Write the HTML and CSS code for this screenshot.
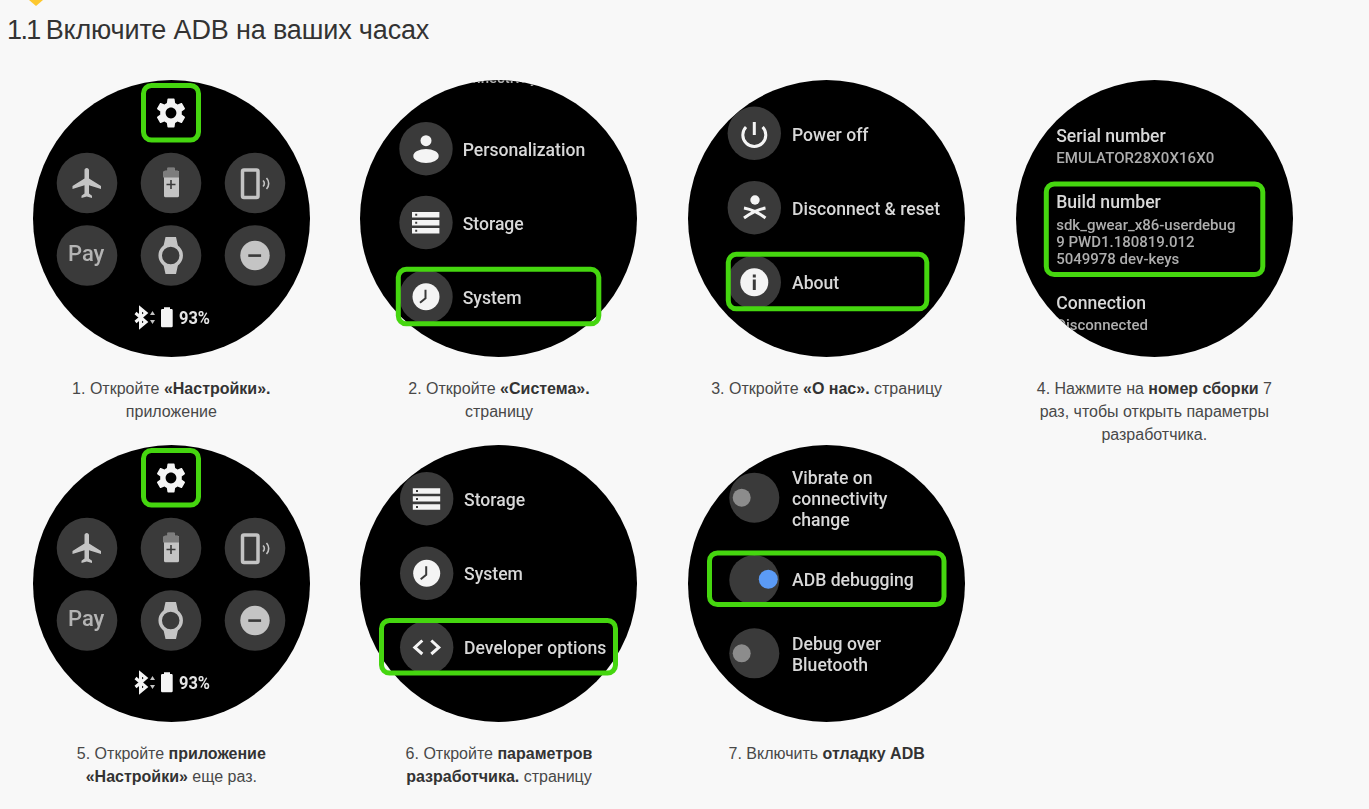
FILE: index.html
```html
<!DOCTYPE html>
<html lang="ru">
<head>
    <meta charset="UTF-8">
    <meta name="viewport" content="width=device-width, initial-scale=1.0">
    <title>Включите ADB на ваших часах</title>
    <link rel="stylesheet" href="styles.css">
</head>
<body>
    <svg class="marker" width="14" height="6" viewBox="0 0 14 6"><polygon points="0,0 14,0 7,6"/></svg>
    <h1><span class="num">1.1 </span>Включите ADB на ваших часах</h1>

    <div class="steps">
        <!-- step 1 -->
        <figure class="step">
            <svg class="watch" width="277" height="277" viewBox="0 0 277 277">
                <defs>
                    <clipPath id="face"><circle cx="138.5" cy="138.5" r="138.5"/></clipPath>
                    <g id="icon-storage">
                        <path class="white" d="M-13.7-10.5h27.4v5.6h-27.4zM-13.7-2.5h27.4v5.4h-27.4zM-13.7 5.5h27.4v5.6h-27.4z"/>
                        <path class="tile" d="M-10.5-8.7h2v2h-2zM-10.5-.8h2v2h-2zM-10.5 7.3h2v2h-2z"/>
                    </g>
                    <g id="icon-clock">
                        <circle class="white" r="13.5"/>
                        <path class="hand" d="M-.5-7V1.5L-6 6"/>
                    </g>
                    <g id="quick">
                        <path class="white" transform="translate(120 15) scale(1.5)" d="M19.14 12.94c.04-.3.06-.61.06-.94 0-.32-.02-.64-.07-.94l2.03-1.58c.18-.14.23-.41.12-.61l-1.92-3.32c-.12-.22-.37-.29-.59-.22l-2.39.96c-.5-.38-1.03-.7-1.62-.94l-.36-2.54c-.04-.24-.24-.41-.48-.41h-3.84c-.24 0-.43.17-.47.41l-.36 2.54c-.59.24-1.13.57-1.62.94l-2.39-.96c-.22-.08-.47 0-.59.22L2.74 8.87c-.12.21-.08.47.12.61l2.03 1.58c-.05.3-.09.63-.09.94s.02.64.07.94l-2.03 1.58c-.18.14-.23.41-.12.61l1.92 3.32c.12.22.37.29.59.22l2.39-.96c.5.38 1.03.7 1.62.94l.36 2.54c.05.24.24.41.48.41h3.84c.24 0 .44-.17.47-.41l.36-2.54c.59-.24 1.13-.56 1.62-.94l2.39.96c.22.08.47 0 .59-.22l1.92-3.32c.12-.22.07-.47-.12-.61l-2.01-1.58zM12 15.6c-1.98 0-3.6-1.62-3.6-3.6s1.62-3.6 3.6-3.6 3.6 1.62 3.6 3.6-1.62 3.6-3.6 3.6z"/>
                        <circle class="tile" cx="54" cy="103" r="30.3"/>
                        <circle class="tile" cx="138" cy="103" r="30.3"/>
                        <circle class="tile" cx="222" cy="103" r="30.3"/>
                        <circle class="tile" cx="54" cy="175.5" r="30.3"/>
                        <circle class="tile" cx="138" cy="175.5" r="30.3"/>
                        <circle class="tile" cx="222" cy="175.5" r="30.3"/>
                        <path class="glyph" transform="translate(36.5 85) scale(1.5)" d="M21 16v-2l-8-5V3.5c0-.83-.67-1.5-1.5-1.5S10 2.67 10 3.5V9l-8 5v2l8-2.5V19l-2 1.5V22l3.5-1 3.5 1v-1.5L13 19v-5.5l8 2.5z"/>
                        <path class="glyph" d="M134.5 87.7h7v3h3a1.5 1.5 0 0 1 1.5 1.5v23.6a1.5 1.5 0 0 1-1.5 1.5h-12a1.5 1.5 0 0 1-1.5-1.5V92.2a1.5 1.5 0 0 1 1.5-1.5h2.500z"/>
                        <path class="level" d="M134.5 87.7h7v3h3a1.5 1.5 0 0 1 1.5 1.5v5.300h-16v-5.300a1.5 1.5 0 0 1 1.5-1.5h2.500z"/>
                        <path class="hand thin" d="M133.500 104.500h9M138 100v9"/>
                        <rect class="line" x="209.500" y="90" width="15.500" height="27.500" rx="1.500"/>
                        <path class="line thin" d="M230 100.500a4 4 0 0 1 0 6M233.500 98a8 8 0 0 1 0 11"/>
                        <text class="pay" x="35" y="180.700">Pay</text>
                        <circle class="line" cx="137.700" cy="175.500" r="10.500"/>
                        <path class="glyph" d="M132.500 157h10.500l2 9h-14.500zM130.500 185h14.500l-2 9h-10.500z"/>
                        <circle class="glyph" cx="222" cy="175.500" r="14.700"/>
                        <rect class="tile" x="215.300" y="174.300" width="12.800" height="2.600"/>
                        <path class="stroke-white" d="M102.500 233l10.500 9-5.500 4.500v-18l5.500 4.500-10.500 9"/>
                        <path class="glyph" d="M119.500 231l2.500 4h-5zM119.500 244l-2.500-4h5z"/>
                        <path class="white" d="M131 227.300h6v1.700h1.500a1.200 1.200 0 0 1 1.200 1.200v15.900a1.200 1.200 0 0 1-1.200 1.200h-9.300a1.200 1.200 0 0 1-1.200-1.200V230.200a1.200 1.200 0 0 1 1.200-1.200H131z"/>
                        <text class="status" x="146" y="244" textLength="31" lengthAdjust="spacingAndGlyphs">93%</text>
                    </g>
                </defs>
                <circle class="face" cx="138.5" cy="138.5" r="138.5"/>
                <g clip-path="url(#face)"><use href="#quick"/></g>
                <rect class="frame" x="110.500" y="5.500" width="55" height="54.500" rx="8"/>
            </svg>
            <figcaption>1. Откройте <b>«Настройки».</b> приложение</figcaption>
        </figure>

        <!-- step 2 -->
        <figure class="step">
            <svg class="watch" width="277" height="277" viewBox="0 0 277 277">
                <circle class="face" cx="138.5" cy="138.5" r="138.5"/>
                <g clip-path="url(#face)">
                    <text class="sub" x="94" y="3">Connectivity</text>
                    <circle class="tile" cx="66" cy="68.700" r="26.700"/>
                    <circle class="white" cx="66" cy="60.700" r="5.500"/>
                    <ellipse class="white" cx="66" cy="76" rx="12.700" ry="7"/>
                    <text class="item" x="102.700" y="76">Personalization</text>
                    <circle class="tile" cx="66" cy="142.500" r="26.700"/>
                    <use href="#icon-storage" transform="translate(65.700 142.500)"/>
                    <text class="item" x="102.700" y="150">Storage</text>
                    <circle class="tile" cx="66" cy="216.700" r="26.700"/>
                    <use href="#icon-clock" transform="translate(66 216.700)"/>
                    <text class="item" x="102.700" y="224">System</text>
                </g>
                <rect class="frame" x="38.300" y="189.300" width="200.500" height="54.500" rx="8"/>
            </svg>
            <figcaption>2. Откройте <b>«Система».</b> страницу</figcaption>
        </figure>

        <!-- step 3 -->
        <figure class="step">
            <svg class="watch" width="277" height="277" viewBox="0 0 277 277">
                <circle class="face" cx="138.5" cy="138.5" r="138.5"/>
                <g clip-path="url(#face)">
                    <circle class="tile" cx="66.300" cy="53.300" r="26.700"/>
                    <path class="stroke-white" d="M58 47a11.500 11.500 0 1 0 16.600 0M66.300 42v13"/>
                    <text class="item" x="104" y="60.700">Power off</text>
                    <circle class="tile" cx="66.300" cy="127.700" r="26.700"/>
                    <circle class="white" cx="67" cy="120" r="4.700"/>
                    <path class="stroke-white" d="M56 128q11 2 21.500 10M77.500 128q-10.500 2-21.500 10"/>
                    <text class="item" x="104" y="135">Disconnect &amp; reset</text>
                    <circle class="tile" cx="66.300" cy="202.300" r="26.700"/>
                    <circle class="white" cx="66.300" cy="202.300" r="14"/>
                    <path class="tile" d="M64.800 194.500h3v3h-3zM64.800 199.500h3v10.500h-3z"/>
                    <text class="item" x="104" y="209">About</text>
                </g>
                <rect class="frame" x="40.300" y="174.300" width="198.500" height="54.500" rx="8"/>
            </svg>
            <figcaption>3. Откройте <b>«О нас».</b> страницу</figcaption>
        </figure>

        <!-- step 4 -->
        <figure class="step">
            <svg class="watch" width="277" height="277" viewBox="0 0 277 277">
                <circle class="face" cx="138.5" cy="138.5" r="138.5"/>
                <g clip-path="url(#face)">
                    <text class="item" x="40.200" y="61.700">Serial number</text>
                    <text class="sub" x="40.200" y="83" textLength="158">EMULATOR28X0X16X0</text>
                    <text class="item" x="40.200" y="127.700">Build number</text>
                    <text class="sub" x="40.200" y="150">sdk_gwear_x86-userdebug</text>
                    <text class="sub" x="40.200" y="166.700">9 PWD1.180819.012</text>
                    <text class="sub" x="40.200" y="184.300">5049978 dev-keys</text>
                    <text class="item" x="40.200" y="229">Connection</text>
                    <text class="sub" x="40.200" y="250">Disconnected</text>
                </g>
                <rect class="frame" x="30.300" y="104" width="216.500" height="90.500" rx="8"/>
            </svg>
            <figcaption>4. Нажмите на <b>номер сборки</b> 7 раз, чтобы открыть параметры разработчика.</figcaption>
        </figure>

        <!-- step 5 -->
        <figure class="step">
            <svg class="watch" width="277" height="277" viewBox="0 0 277 277">
                <circle class="face" cx="138.5" cy="138.5" r="138.5"/>
                <g clip-path="url(#face)"><use href="#quick"/></g>
                <rect class="frame" x="110.500" y="5.500" width="55" height="54.500" rx="8"/>
            </svg>
            <figcaption>5. Откройте <b>приложение «Настройки»</b> еще раз.</figcaption>
        </figure>

        <!-- step 6 -->
        <figure class="step">
            <svg class="watch" width="277" height="277" viewBox="0 0 277 277">
                <circle class="face" cx="138.5" cy="138.5" r="138.5"/>
                <g clip-path="url(#face)">
                    <circle class="tile" cx="66.700" cy="53.700" r="26.700"/>
                    <use href="#icon-storage" transform="translate(66.500 53.700)"/>
                    <text class="item" x="104" y="60.500">Storage</text>
                    <circle class="tile" cx="66.700" cy="128.300" r="26.700"/>
                    <use href="#icon-clock" transform="translate(66.700 128.300)"/>
                    <text class="item" x="104" y="135">System</text>
                    <circle class="tile" cx="66.700" cy="202.300" r="26.700"/>
                    <path class="stroke-white" d="M62.300 195.500l-7.500 7 7.500 6.500M71.300 195.500l7.500 7-7.500 6.500"/>
                    <text class="item" x="104" y="209">Developer options</text>
                </g>
                <rect class="frame" x="21.500" y="175.500" width="234" height="52.500" rx="8"/>
            </svg>
            <figcaption>6. Откройте <b>параметров разработчика.</b> страницу</figcaption>
        </figure>

        <!-- step 7 -->
        <figure class="step">
            <svg class="watch" width="277" height="277" viewBox="0 0 277 277">
                <circle class="face" cx="138.5" cy="138.5" r="138.5"/>
                <g clip-path="url(#face)">
                    <circle class="tile" cx="66.300" cy="52.700" r="25"/>
                    <circle class="thumb" cx="53.700" cy="52.700" r="9"/>
                    <text class="item" x="104" y="39">Vibrate on</text>
                    <text class="item" x="104" y="60.300">connectivity</text>
                    <text class="item" x="104" y="81">change</text>
                    <circle class="tile" cx="66.300" cy="135" r="25"/>
                    <circle class="thumb-on" cx="80.300" cy="134.300" r="9.500"/>
                    <text class="item" x="104" y="141">ADB debugging</text>
                    <circle class="tile" cx="66.300" cy="208.300" r="25"/>
                    <circle class="thumb" cx="53.700" cy="208.300" r="9"/>
                    <text class="item" x="104" y="205">Debug over</text>
                    <text class="item" x="104" y="226">Bluetooth</text>
                </g>
                <rect class="frame" x="21.500" y="108" width="234.500" height="51.500" rx="8"/>
            </svg>
            <figcaption>7. Включить <b>отладку ADB</b></figcaption>
        </figure>
    </div>
</body>
</html>
```

FILE: styles.css
```css
:root {
    --bg-main: #f8f8f8;
    --text-main: #333333;
    --text-soft: #484848;
    --accent: #fdc82f;
    --frame: #45d60f;
    --tile: #3a3a3a;
    --glyph: #c4c4c4;
    --white: #f4f4f4;
}
html, body {
    margin: 0;
    padding: 0;
    background: var(--bg-main);
    color: var(--text-main);
    font-family: "Liberation Sans", Arial, sans-serif;
}
.marker {
    display: block;
    margin-left: 29px;
    fill: var(--accent);
}
h1 {
    margin: 8px 0 0 7px;
    font-size: 27px;
    line-height: 32px;
    font-weight: 400;
    letter-spacing: -0.15px;
}
.num {
    letter-spacing: -1.6px;
}
.steps {
    display: grid;
    grid-template-columns: repeat(4, 327.67px);
    grid-auto-rows: 365px;
    margin: 34px 0 0 7.5px;
}
.step {
    display: flex;
    flex-direction: column;
    align-items: center;
    margin: 0;
}
.watch {
    display: block;
    flex: none;
    filter: blur(0.6px);
}
figcaption {
    width: 240px;
    margin-top: 20px;
    font-size: 16px;
    line-height: 23px;
    text-align: center;
    color: var(--text-soft);
}
figcaption b {
    color: var(--text-main);
}

/* watch face drawing */
.face { fill: #000; }
.tile { fill: var(--tile); }
.glyph { fill: var(--glyph); }
.white { fill: var(--white); }
.level { fill: #7d7d7d; }
.thumb { fill: #8c8c8c; }
.thumb-on { fill: #5b9bf6; }
.frame {
    fill: none;
    stroke: var(--frame);
    stroke-width: 5;
}
.hand {
    fill: none;
    stroke: #3a3a3a;
    stroke-width: 2;
}
.line {
    fill: none;
    stroke: var(--glyph);
    stroke-width: 3.5;
}
.thin { stroke-width: 1.6; }
.stroke-white {
    fill: none;
    stroke: var(--white);
    stroke-width: 3;
}
.item {
    font-family: Roboto, sans-serif;
    font-size: 17.6px;
    font-weight: 500;
    fill: #d8d8d8;
}
.sub {
    font-family: Roboto, sans-serif;
    font-size: 15px;
    font-weight: 500;
    fill: #aeaeae;
}
.pay {
    font-family: Roboto, sans-serif;
    font-size: 22px;
    font-weight: 500;
    fill: #b4b4b4;
}
.status {
    font-family: Roboto, sans-serif;
    font-size: 18px;
    font-weight: 700;
    fill: #e4e4e4;
}
```
